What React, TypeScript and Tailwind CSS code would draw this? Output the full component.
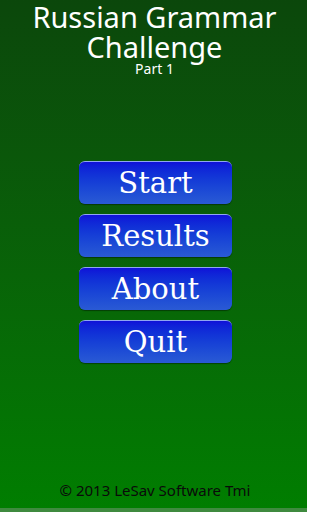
import React from 'react';

const MenuButton: React.FC<{ label: string }> = ({ label }) => (
  <button
    type="button"
    className="w-[153px] h-[43px] rounded-[6px] border-t border-[#8fa6f0] bg-gradient-to-b from-[#1010d8] to-[#2a5ad4] text-white text-[29px] leading-none flex items-center justify-center shadow-[0_1px_1px_rgba(0,0,0,0.4)]"
    style={{ fontFamily: '"DejaVu Serif", "Liberation Serif", serif' }}
  >
    {label}
  </button>
);

export default function App() {
  return (
    <div
      className="w-[307px] h-[512px] flex flex-col items-center bg-gradient-to-b from-[#0b470b] to-[#007e00] overflow-hidden"
      style={{ fontFamily: '"Noto Sans", "Open Sans", sans-serif' }}
    >
      {/* Title */}
      <div className="flex flex-col items-center text-white pt-[2px] ml-[2px]">
        <h1 className="text-[29px] leading-[30px] text-center">
          Russian Grammar
          <br />
          Challenge
        </h1>
        <p className="text-[14px] leading-[15px] -mt-[1px]">Part 1</p>
      </div>

      {/* Menu */}
      <div className="flex flex-col gap-[10px] mt-[85px] ml-[4px]">
        <MenuButton label="Start" />
        <MenuButton label="Results" />
        <MenuButton label="About" />
        <MenuButton label="Quit" />
      </div>

      {/* Footer */}
      <p className="mt-auto mb-[10px] ml-[3px] text-[15px] text-[#0a0a0a] leading-none">© 2013 LeSav Software Tmi</p>
      <div className="w-full h-[4px] bg-[#3f8a3f]" />
    </div>
  );
}
